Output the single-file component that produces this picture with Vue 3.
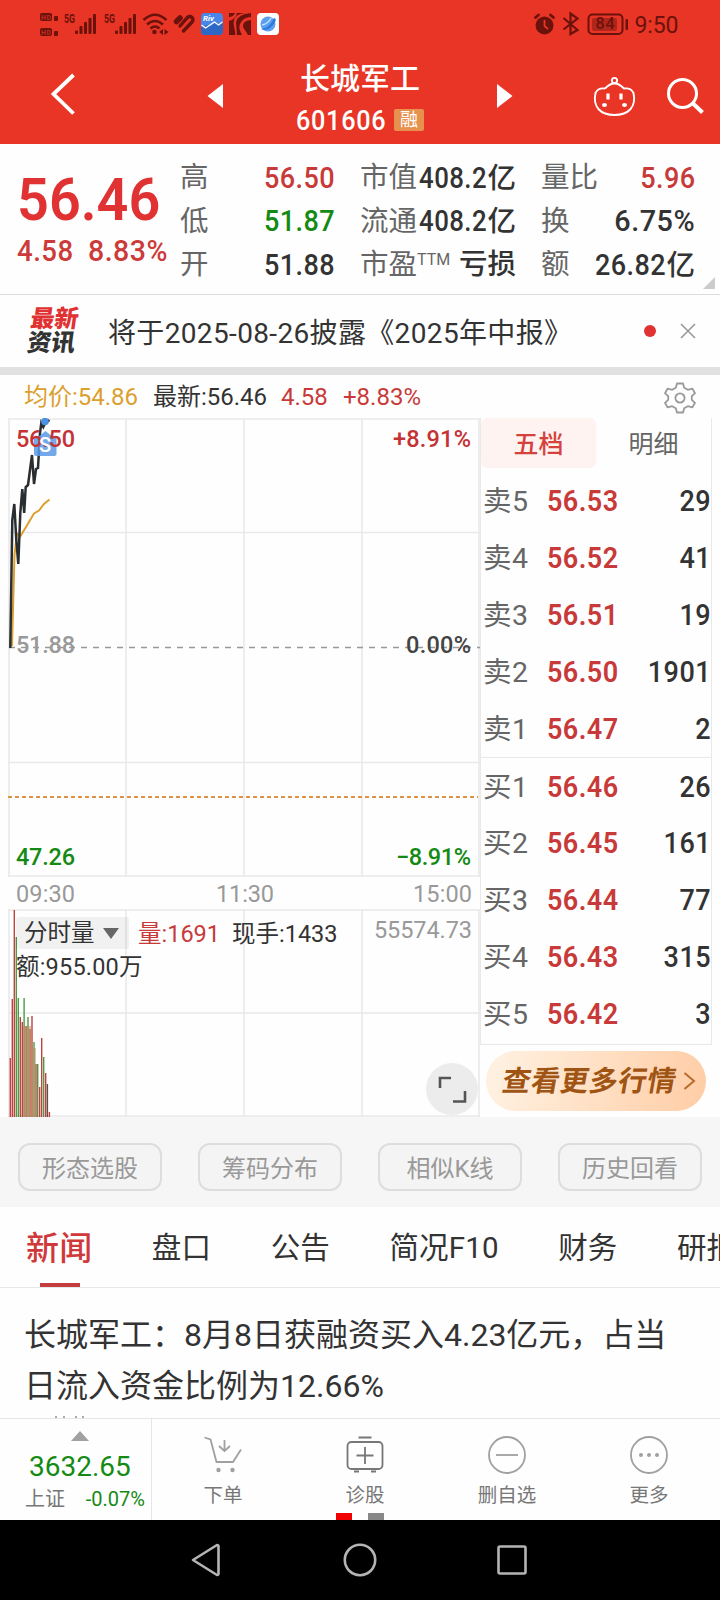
<script setup>
import { ref } from 'vue'

const quotes = [
  { label: '高', value: '56.50', color: 'red' },
  { label: '市值', value: '408.2', unit: '亿', color: 'tight' },
  { label: '量比', value: '5.96', color: 'red' },
  { label: '低', value: '51.87', color: 'green' },
  { label: '流通', value: '408.2', unit: '亿', color: 'tight' },
  { label: '换', value: '6.75%', color: 'wide' },
  { label: '开', value: '51.88' },
  { label: '市盈', sup: 'TTM', unit: '亏损' },
  { label: '额', value: '26.82', unit: '亿' }
]

const orders = [
  { label: '卖5', price: '56.53', qty: 29 },
  { label: '卖4', price: '56.52', qty: 41 },
  { label: '卖3', price: '56.51', qty: 19 },
  { label: '卖2', price: '56.50', qty: 1901 },
  { label: '卖1', price: '56.47', qty: 2 },
  { label: '买1', price: '56.46', qty: 26 },
  { label: '买2', price: '56.45', qty: 161 },
  { label: '买3', price: '56.44', qty: 77 },
  { label: '买4', price: '56.43', qty: 315 },
  { label: '买5', price: '56.42', qty: 3 }
]

// x, top and colour of each minute bar
const bars = [
  [10.3, 640, 'r'], [12.3, 581, 'r'], [14.3, 492, 'r'], [16.3, 519, 'g'], [18.3, 580, 'g'],
  [20.3, 599, 'r'], [22.3, 604, 'r'], [24.1, 580, 'g'], [26.1, 608, 'r'], [28, 599, 'g'],
  [30, 611, 'r'], [32, 598, 'r'], [34, 624, 'g'], [36, 646, 'r'], [37.7, 646, 'g'],
  [39.7, 669, 'r'], [41.7, 620, 'r'], [43.7, 639, 'g'], [45.7, 655, 'r'], [47.4, 666, 'd'],
  [49.4, 694, 'r']
]
const barColors = { r: '#c0413f', g: '#4c9a44', d: '#6a4a48' }

const gridX = [9, 126, 244, 362, 479]
const tools = ['形态选股', '筹码分布', '相似K线', '历史回看']
const tabs = ['新闻', '盘口', '公告', '简况F10', '财务', '研报']
const activeTab = ref('新闻')
const bookTab = ref('五档')
</script>

<template>
  <div class="page">
    <header class="top">
      <div class="status">
        <svg width="290" height="48" viewBox="0 0 290 48" fill="#6a120b">
          <g>
            <rect x="40" y="13" width="12" height="8" rx="2" />
            <rect x="54" y="16" width="4" height="5" rx="1" />
            <rect x="40" y="28" width="12" height="8" rx="2" />
            <rect x="54" y="31" width="4" height="5" rx="1" />
            <g fill="#c22a1f" font-size="7" font-weight="700">
              <text x="41" y="19.7" textLength="10">HD</text>
              <text x="41" y="34.7" textLength="10">HD</text>
            </g>
          </g>
          <g v-for="x in [64, 104]" :key="x" :transform="`translate(${x} 0)`">
            <text x="0" y="23" font-size="12.500" font-weight="700" textLength="11" lengthAdjust="spacingAndGlyphs">5G</text>
            <rect x="11" y="30.500" width="3" height="3.500" rx="1" />
            <rect x="15.500" y="26" width="3" height="8" rx="1" />
            <rect x="20" y="22" width="3" height="12" rx="1" />
            <rect x="24.500" y="18" width="3" height="16" rx="1" />
            <rect x="29" y="14" width="3" height="20" rx="1" />
          </g>
          <g fill="none" stroke="#6a120b" stroke-width="2.600">
            <path d="M143.500 20 Q155 9.500 166.500 20" />
            <path d="M147 24.500 Q155 17.500 163 24.500" />
            <path d="M150.500 28.500 Q155 24.500 159.500 28.500" />
          </g>
          <circle cx="154.500" cy="32" r="2.300" />
          <path d="M159 32l4-3v6zM168.500 32l-4-3v6z" />
          <g fill="none" stroke="#6a120b" stroke-linecap="round">
            <path d="M176.500 21.500l3.500-3.500" stroke-width="5.500" />
            <path d="M180 26l7.500-8.500a3 3 0 0 1 4.500 4.500l-8.500 9" stroke-width="3.400" />
          </g>
          <rect x="201" y="13" width="22" height="22" rx="4" fill="#4a86e8" />
          <path d="M201 27l6-2 4 1 5-4 3 2 4-2v9a4 4 0 0 1-4 4h-14a4 4 0 0 1-4-4z" fill="#2c68c4" />
          <path d="M201.500 25l4 3 9-6 4 3 4-3" fill="none" stroke="#fff" stroke-width="1.300" />
          <text x="203" y="21" font-size="8" font-weight="700" font-style="italic" fill="#fff">Riv</text>
          <rect x="229" y="13" width="22" height="22" />
          <path d="M229 17q4 0 6-4h2q-1 6-8 8zM251 13.500q-13 0-15 9l1 12.500h-1.500l-2-12q1-10 12-10zM251 20q-9 1-8 7l5 8h-6q-4-7-2-11 3-7 11-7z" fill="#e93526" />
          <rect x="257" y="13" width="22" height="22" rx="4" fill="#fff" />
          <circle cx="268" cy="24" r="7.500" fill="#5aa0ee" />
          <path d="M261 29q9-1 13-11q4 1-1 7-6 7-12 4z" fill="#2f78dd" />
          <path d="M262 25q6-1 9-7" stroke="#bfe0ff" stroke-width="1.500" fill="none" />
        </svg>
        <svg width="190" height="48" viewBox="530 0 190 48" fill="#6a120b">
          <circle cx="544.500" cy="25.500" r="9" />
          <path d="M535.500 17.500l3-2.500M553.500 17.500l-3-2.500" stroke="#6a120b" stroke-width="2.800" stroke-linecap="round" />
          <path d="M544.500 20v6l3.500 3" fill="none" stroke="#e93526" stroke-width="1.800" />
          <path d="M563.500 18l14 12-7 4V13.500l7 5-14 11" fill="none" stroke="#6a120b" stroke-width="2.200" />
          <rect x="588.500" y="14.500" width="34" height="19.500" rx="4" fill="none" stroke="#6a120b" stroke-width="2" />
          <rect x="592" y="18" width="25" height="13" rx="2" fill="#b0261b" />
          <text x="595.500" y="29" font-size="16" font-weight="500" textLength="19">84</text>
          <rect x="625.500" y="19" width="2.500" height="11" rx="1" />
          <text x="634.500" y="33" font-size="23" textLength="44">9:50</text>
        </svg>
      </div>
      <div class="titlebar">
        <svg width="280" height="96" viewBox="0 48 280 96">
          <path d="M73.500 75L53.500 94l20 19.500" fill="none" stroke="#fff" stroke-width="3.800" />
          <path d="M223 84v24l-15.500-12z" fill="#fff" />
        </svg>
        <div class="title">
          <div class="name">长城军工</div>
          <div class="code"><span>601606</span><i>融</i></div>
        </div>
        <svg width="280" height="96" viewBox="440 48 280 96" fill="none" stroke="#fff">
          <path d="M497 84v24l15.500-12z" fill="#fff" stroke="none" />
          <g stroke-width="1.900">
            <circle cx="614.500" cy="80.500" r="2.600" />
            <path d="M605 88.500q9.500-10 19 0 7-1 9.500 4.500c3 14-5 22-19 22s-22-8-19-22q2.500-5.500 9.500-4.500" />
          </g>
          <path d="M608 93.500v6M621 93.500v6" stroke-width="3.200" />
          <g fill="#fff" stroke="none">
            <ellipse cx="604.500" cy="105" rx="2.500" ry="2" />
            <ellipse cx="624.500" cy="105" rx="2.500" ry="2" />
          </g>
          <circle cx="682.500" cy="93.500" r="14" stroke-width="3" />
          <path d="M692.500 103l10 9.500" stroke-width="4" />
        </svg>
      </div>
    </header>

    <section class="quote">
      <div class="last">
        <div class="price">56.46</div>
        <div class="change"><span>4.58</span><span>8.83%</span></div>
      </div>
      <div class="grid">
        <div v-for="q in quotes" :key="q.label" class="cell">
          <span class="label">{{ q.label }}<sup v-if="q.sup">{{ q.sup }}</sup></span>
          <span class="value"><span v-if="q.value" class="din" :class="q.color">{{ q.value }}</span>{{ q.unit }}</span>
        </div>
      </div>
      <span class="corner"></span>
    </section>

    <section class="notice">
      <div class="logo"><b>最新</b><b>资讯</b></div>
      <span class="msg">将于2025-08-26披露《2025年中报》</span>
      <span class="dot"></span>
      <svg width="16" height="16" viewBox="0 0 16 16"><path d="M1 1l14 14M15 1L1 15" stroke="#999" stroke-width="1.600" /></svg>
    </section>

    <section class="info">
      <span class="avg">均价:54.86</span>
      <span class="now">最新:56.46</span>
      <span class="diff">4.58</span>
      <span class="pct">+8.83%</span>
      <svg width="32" height="32" viewBox="-16 -16 32 32" fill="none" stroke="#999" stroke-width="1.800" stroke-linejoin="round">
        <path d="M-3-14.500h6l1.200 4.300 3.600 2 4.600-1.200 2.600 4.600-3.200 3v3.600l3.200 3-2.600 4.600-4.600-1.200-3.600 2L3 14.500h-6l-1.200-4.300-3.600-2-4.600 1.200-2.600-4.600 3.200-3v-3.600l-3.200-3 2.600-4.600 4.600 1.200 3.600-2z" />
        <circle r="4.600" />
      </svg>
    </section>

    <section class="market">
      <div class="chart">
        <svg width="480" height="699" viewBox="0 0 480 699">
          <g stroke="#e9e9e9" stroke-width="1.600">
            <g v-for="x in gridX" :key="x">
              <path :d="`M${x} 1V459M${x} 492V699`" />
            </g>
            <path d="M8 1H480M8 114.500H480M8 344.500H480M8 458H480M8 492H480M8 595H480M8 698H480" />
          </g>
          <path d="M9 229.500H480" stroke="#999" stroke-width="1.400" stroke-dasharray="6 6" />
          <path d="M8 379H478" stroke="#dc9346" stroke-width="2" stroke-dasharray="4 3" />
          <path d="M12 228L14.500 137 17 115.500 20.500 118 26 109 34 95.500 39 92.500 44 86 49.500 81.500" fill="none" stroke="#dba02e" stroke-width="2" />
          <path d="M10.300 230L12.300 102 14.300 86 16.300 122 18.300 146 20.300 95 22.300 71 24.200 95 25.700 69 28 67 30 52 32 37 34 66 36 51 38 50 40 15 41.300 5 43.300 9 45.300 5 49.500 2" fill="none" stroke="#2b2e30" stroke-width="2.500" />
          <path d="M38 19l7.500-6 7.500 6h3.500v17a2 2 0 0 1-2 2h-18.500a2 2 0 0 1-2-2v-17z" fill="#5b9ae8" opacity="0.850" />
          <circle cx="45" cy="3.500" r="3.800" fill="#4b90e2" />
          <g v-for="b in bars" :key="b[0]">
            <path :d="`M${b[0]} ${b[1]}V699`" :stroke="barColors[b[2]]" stroke-width="1.400" />
          </g>
          <path d="M23 608H32V630H36V699H23z" fill="#b88a60" opacity="0.500" />
          <g class="axis">
            <text x="16" y="29" textLength="59" fill="#c53235">56.50</text>
            <text x="39" y="34" font-size="20" fill="#fff">S</text>
            <text x="16" y="235" textLength="59" fill="#999">51.88</text>
            <text x="16" y="447" textLength="59" fill="#148a14">47.26</text>
            <text x="393" y="29" textLength="78" fill="#c53235">+8.91%</text>
            <text x="406" y="235" textLength="65" fill="#444">0.00%</text>
            <text x="396" y="447" textLength="75" fill="#148a14">−8.91%</text>
            <g fill="#999" class="time">
              <text x="16" y="484" textLength="59">09:30</text>
              <text x="216" y="484" textLength="58">11:30</text>
              <text x="413" y="484" textLength="59">15:00</text>
              <text x="374" y="520" textLength="98">55574.73</text>
            </g>
          </g>
        </svg>
        <div class="vol">
          <span class="select">分时量<i></i></span>
          <span class="v red">量:1691</span>
          <span class="v">现手:1433</span>
          <div class="amount">额:955.00万</div>
        </div>
        <div class="expand">
          <svg width="52" height="52" viewBox="0 0 52 52" fill="none" stroke="#555" stroke-width="2.600">
            <path d="M14 25V15h11M39 28v10.500H27" />
          </svg>
        </div>
      </div>

      <div class="side">
        <div class="book">
          <div class="booktabs">
            <span v-for="t in ['五档', '明细']" :key="t" :class="{ on: t === bookTab }" @click="bookTab = t">{{ t }}</span>
          </div>
          <div v-for="o in orders" :key="o.label" class="order">
            <span class="side-label">{{ o.label }}</span>
            <span class="din red">{{ o.price }}</span>
            <span class="din qty">{{ o.qty }}</span>
          </div>
        </div>
        <div class="more">
          <span>查看更多行情</span>
          <svg width="13" height="20" viewBox="0 0 13 20"><path d="M1.500 2l9.500 8-9.500 8" fill="none" stroke="#b56c2d" stroke-width="2" /></svg>
        </div>
      </div>
    </section>

    <section class="tools">
      <button v-for="t in tools" :key="t">{{ t }}</button>
    </section>

    <nav class="tabs">
      <span v-for="t in tabs" :key="t" :class="{ active: t === activeTab }" @click="activeTab = t">{{ t }}</span>
    </nav>

    <section class="news">
      <p>长城军工：8月8日获融资买入4.23亿元，占当日流入资金比例为12.66%</p>
      <svg width="40" height="2" viewBox="0 0 40 2"><path d="M4 1h2M12 1h2M24 1h2M31 1h2" stroke="#aaa" stroke-width="2" /></svg>
    </section>

    <footer class="bottom">
      <div class="index">
        <i></i>
        <div class="point">3632.65</div>
        <div class="row"><span>上证</span><em>-0.07%</em></div>
      </div>
      <div class="action">
        <svg width="40" height="40" viewBox="0 0 40 40" fill="none" stroke="#a0a0a0" stroke-width="1.800">
          <path d="M1.500 2.500l6 2 6 22.500h16.500l8-12.500M21.500 5v10.500M16 11l5.500 5 5.500-5" />
          <circle cx="15.500" cy="35" r="2.200" fill="#a0a0a0" stroke="none" />
          <circle cx="29.500" cy="35" r="2.200" fill="#a0a0a0" stroke="none" />
        </svg>
        <span>下单</span>
      </div>
      <div class="action">
        <svg width="40" height="40" viewBox="0 0 40 40" fill="none" stroke="#777" stroke-width="1.800">
          <rect x="2.500" y="7" width="35" height="27" rx="4" />
          <path d="M13.500 2.500h13M20 12v17M11.500 20.500h17M9 36.500h5M26 36.500h5" />
        </svg>
        <span>诊股</span>
      </div>
      <div class="action">
        <svg width="40" height="40" viewBox="0 0 40 40" fill="none" stroke="#a0a0a0" stroke-width="1.800">
          <circle cx="20" cy="20" r="18" />
          <path d="M9 20h22" />
        </svg>
        <span>删自选</span>
      </div>
      <div class="action">
        <svg width="40" height="40" viewBox="0 0 40 40" fill="none" stroke="#a0a0a0" stroke-width="1.800">
          <circle cx="20" cy="20" r="18" />
          <g fill="#a0a0a0" stroke="none">
            <circle cx="12" cy="20" r="2" />
            <circle cx="20" cy="20" r="2" />
            <circle cx="28" cy="20" r="2" />
          </g>
        </svg>
        <span>更多</span>
      </div>
      <div class="pager"><i></i><i></i></div>
    </footer>

    <div class="sysnav">
      <svg width="720" height="80" viewBox="0 0 720 80" fill="none" stroke="#b4b4b4" stroke-width="2.600" stroke-linejoin="round">
        <path d="M193 40l24-15q1.500 0 1.500 1.500v27q0 1.500-1.500 1.500z" />
        <circle cx="360" cy="40" r="15.200" />
        <rect x="498.500" y="26.500" width="27" height="27" rx="1.500" />
      </svg>
    </div>
  </div>
</template>

<style>
body {
  margin: 0;
  background: #fff;
}
</style>

<style scoped>
.page {
  width: 720px;
  height: 1600px;
  overflow: hidden;
  background: #fefefe;
  color: #333;
  font-family: Roboto, "Noto Sans CJK SC", sans-serif;
}
.page * {
  box-sizing: border-box;
}
svg {
  display: block;
  flex: none;
}
.red {
  color: #c83a39;
}
.green {
  color: #148a14;
}
.din {
  display: inline-block;
  font-size: 30px;
  font-weight: 500;
  letter-spacing: 0.5px;
  transform: scaleX(0.9);
  transform-origin: right center;
}
.top {
  height: 144px;
  background: #e93526;
}
.status {
  display: flex;
  justify-content: space-between;
  height: 48px;
}
.titlebar {
  display: flex;
  height: 96px;
  color: #fff;
}
.title {
  width: 160px;
  text-align: center;
}
.name {
  margin-top: 10px;
  font-size: 30px;
  font-weight: 500;
  line-height: 42px;
}
.code {
  display: flex;
  align-items: center;
  height: 40px;
  padding-left: 16px;
}
.code span {
  width: 98px;
  font-size: 28px;
  font-weight: 500;
  text-align: left;
  transform: scaleX(0.9);
  transform-origin: left center;
  letter-spacing: 0.8px;
}
.code i {
  width: 30px;
  height: 22px;
  border-radius: 2px;
  background: #e6914e;
  font-size: 18px;
  line-height: 21px;
  font-style: normal;
}
.quote {
  position: relative;
  display: flex;
  height: 151px;
  border-bottom: 1px solid #ddd;
}
.last {
  width: 180px;
  color: #e03232;
}
.price {
  margin: 21px 0 0 17px;
  font-size: 60px;
  font-weight: 600;
  line-height: 70px;
  transform: scaleX(0.93);
  transform-origin: left center;
}
.change {
  display: flex;
  margin-left: 17px;
  font-size: 30px;
  font-weight: 500;
  line-height: 32px;
  color: #cc3b39;
}
.change span {
  width: 71px;
  transform: scaleX(0.92);
  transform-origin: left center;
  letter-spacing: 0.5px;
}
.change span:last-child {
  transform: scaleX(0.95);
}
.grid {
  display: grid;
  grid-template-columns: 155px 156px 154px;
  column-gap: 25px;
  grid-auto-rows: 43.500px;
  padding-top: 12px;
}
.cell {
  display: flex;
  justify-content: space-between;
  align-items: center;
  white-space: nowrap;
  font-size: 28.500px;
  line-height: 43px;
}
.label {
  color: #666;
}
sup {
  font-size: 16px;
  line-height: 10px;
  vertical-align: 9px;
}
.value {
  font-weight: 500;
}
.cell .din {
  margin-left: -10px;
}
.cell .wide {
  transform: scaleX(0.96);
}
.cell .tight {
  transform: scaleX(0.86);
}
.corner {
  position: absolute;
  right: 5px;
  bottom: 5px;
  border-left: 12px solid transparent;
  border-bottom: 12px solid #ccc;
}
.notice {
  display: flex;
  align-items: center;
  height: 80px;
  padding: 0 24px 0 29px;
  border-bottom: 8px solid #e1e1e1;
}
.logo {
  width: 79px;
  transform: skewX(-8deg);
}
.logo b {
  display: block;
  font-size: 24px;
  font-weight: 900;
  line-height: 24px;
}
.logo b:first-child {
  color: #e03232;
}
.msg {
  flex: 1;
  font-size: 28px;
  letter-spacing: 0.35px;
  white-space: nowrap;
}
.dot {
  width: 12px;
  height: 12px;
  margin-right: 24px;
  border-radius: 50%;
  background: #e03232;
}
.info {
  display: flex;
  align-items: center;
  height: 43px;
  padding: 2px 24px 0;
  font-size: 24px;
  line-height: 41px;
}
.avg {
  width: 129px;
  color: #dba02e;
}
.now {
  width: 128px;
}
.diff {
  width: 62px;
  color: #c83a39;
}
.pct {
  flex: 1;
  color: #c83a39;
}
.market {
  display: flex;
  height: 699px;
}
.chart {
  position: relative;
  width: 480px;
}
.axis {
  font-size: 23.500px;
  font-weight: 500;
}
.time {
  font-weight: 400;
}
.vol {
  position: absolute;
  left: 16px;
  top: 499px;
  display: grid;
  grid-template-columns: 122px 94px 120px;
  font-size: 23.500px;
  line-height: 34px;
  white-space: nowrap;
}
.select {
  display: flex;
  align-items: center;
  width: 113px;
  height: 32px;
  padding-left: 8px;
  border-radius: 3px;
  background: rgba(0, 0, 0, 0.05);
}
.select i {
  margin-left: 8px;
  border: 8px solid transparent;
  border-top: 11px solid #666;
  border-bottom: 0;
}
.amount {
  grid-column: 1 / 3;
  margin-top: -1px;
  letter-spacing: 0.2px;
}
.expand {
  position: absolute;
  left: 426px;
  top: 645px;
  width: 52px;
  height: 52px;
  border-radius: 50%;
  background: #ececec;
}
.side {
  width: 240px;
}
.book {
  width: 232px;
  height: 627px;
  border: 1px solid #e9e9e9;
  border-top: 0;
}
.booktabs {
  display: flex;
  height: 54px;
}
.booktabs span {
  width: 115px;
  height: 50px;
  border-radius: 6px;
  color: #666;
  font-size: 25px;
  line-height: 54px;
  text-align: center;
}
.booktabs .on {
  background: #fff3f2;
  color: #d5423c;
  font-weight: 500;
}
.order {
  display: flex;
  align-items: center;
  height: 57px;
  padding-left: 2px;
}
.order:nth-child(7) {
  border-top: 1px solid #e9e9e9;
}
.side-label {
  width: 64px;
  margin-top: -4px;
  color: #666;
  font-size: 28.500px;
  letter-spacing: 0.6px;
}
.order .din {
  width: 78px;
  transform-origin: left center;
}
.order .red {
  font-weight: 600;
}
.order .qty {
  flex: 1;
  text-align: right;
  transform-origin: right center;
}
.more {
  display: flex;
  align-items: center;
  width: 220px;
  height: 60px;
  margin: 6px 0 0 6px;
  padding: 0 10px 0 17px;
  border-radius: 30px;
  background: linear-gradient(100deg, #fff2e3, #ffcda5);
}
.more span {
  flex: 1;
  margin-top: -5px;
  font-size: 28.500px;
  font-weight: 700;
  letter-spacing: 0.5px;
  color: #9f5413;
  transform: skewX(-10deg);
  white-space: nowrap;
}
.tools {
  display: flex;
  gap: 36px;
  height: 90px;
  padding: 26px 18px 0;
  background: #f6f6f6;
}
.tools button {
  width: 144px;
  height: 48px;
  padding: 0 0 2px;
  border: 2px solid #ddd;
  border-radius: 12px;
  background: #f4f4f4;
  color: #999;
  font: inherit;
  font-size: 24px;
}
.tabs {
  display: flex;
  gap: 59.500px;
  height: 81px;
  padding-left: 26px;
  border-bottom: 1px solid #e9e9e9;
  font-size: 29.500px;
  line-height: 83px;
  letter-spacing: 0.15px;
  white-space: nowrap;
}
.tabs .active {
  position: relative;
  color: #d0393a;
  font-size: 33px;
  font-weight: 500;
}
.active::after {
  content: "";
  position: absolute;
  left: 14px;
  bottom: 0;
  width: 40px;
  height: 4px;
  background: #c43d3e;
}
.news {
  height: 130px;
  padding-left: 24px;
  overflow: hidden;
}
.news p {
  width: 650px;
  margin: 22px 0 0;
  font-size: 32px;
  line-height: 51px;
}
.news svg {
  margin: 4px 0 0 27px;
}
.bottom {
  position: relative;
  display: flex;
  height: 102px;
  border-top: 1px solid #e6e6e6;
}
.index {
  width: 152px;
  border-right: 1px solid #e6e6e6;
}
.index i {
  display: block;
  width: 18px;
  margin: 12px 0 0 71px;
  border: 9px solid transparent;
  border-top: 0;
  border-bottom: 10px solid #a0a0a0;
}
.point {
  margin: 10px 0 0 29px;
  font-size: 28px;
  line-height: 32px;
  color: #148a14;
}
.row {
  display: flex;
  justify-content: space-between;
  align-items: center;
  padding: 0 6px 0 25px;
  font-size: 20px;
  line-height: 32px;
  color: #777;
}
.row em {
  font-style: normal;
  color: #148a14;
}
.action {
  width: 142px;
  padding-top: 16px;
  text-align: center;
  color: #777;
  font-size: 19.500px;
}
.action svg {
  margin: 0 auto 4px;
}
.pager {
  position: absolute;
  left: 336px;
  bottom: 0;
  display: flex;
  gap: 16px;
}
.pager i {
  width: 16px;
  height: 7px;
  background: #888;
}
.pager i:first-child {
  background: #f00000;
}
.sysnav {
  height: 80px;
  background: #000;
}
</style>
